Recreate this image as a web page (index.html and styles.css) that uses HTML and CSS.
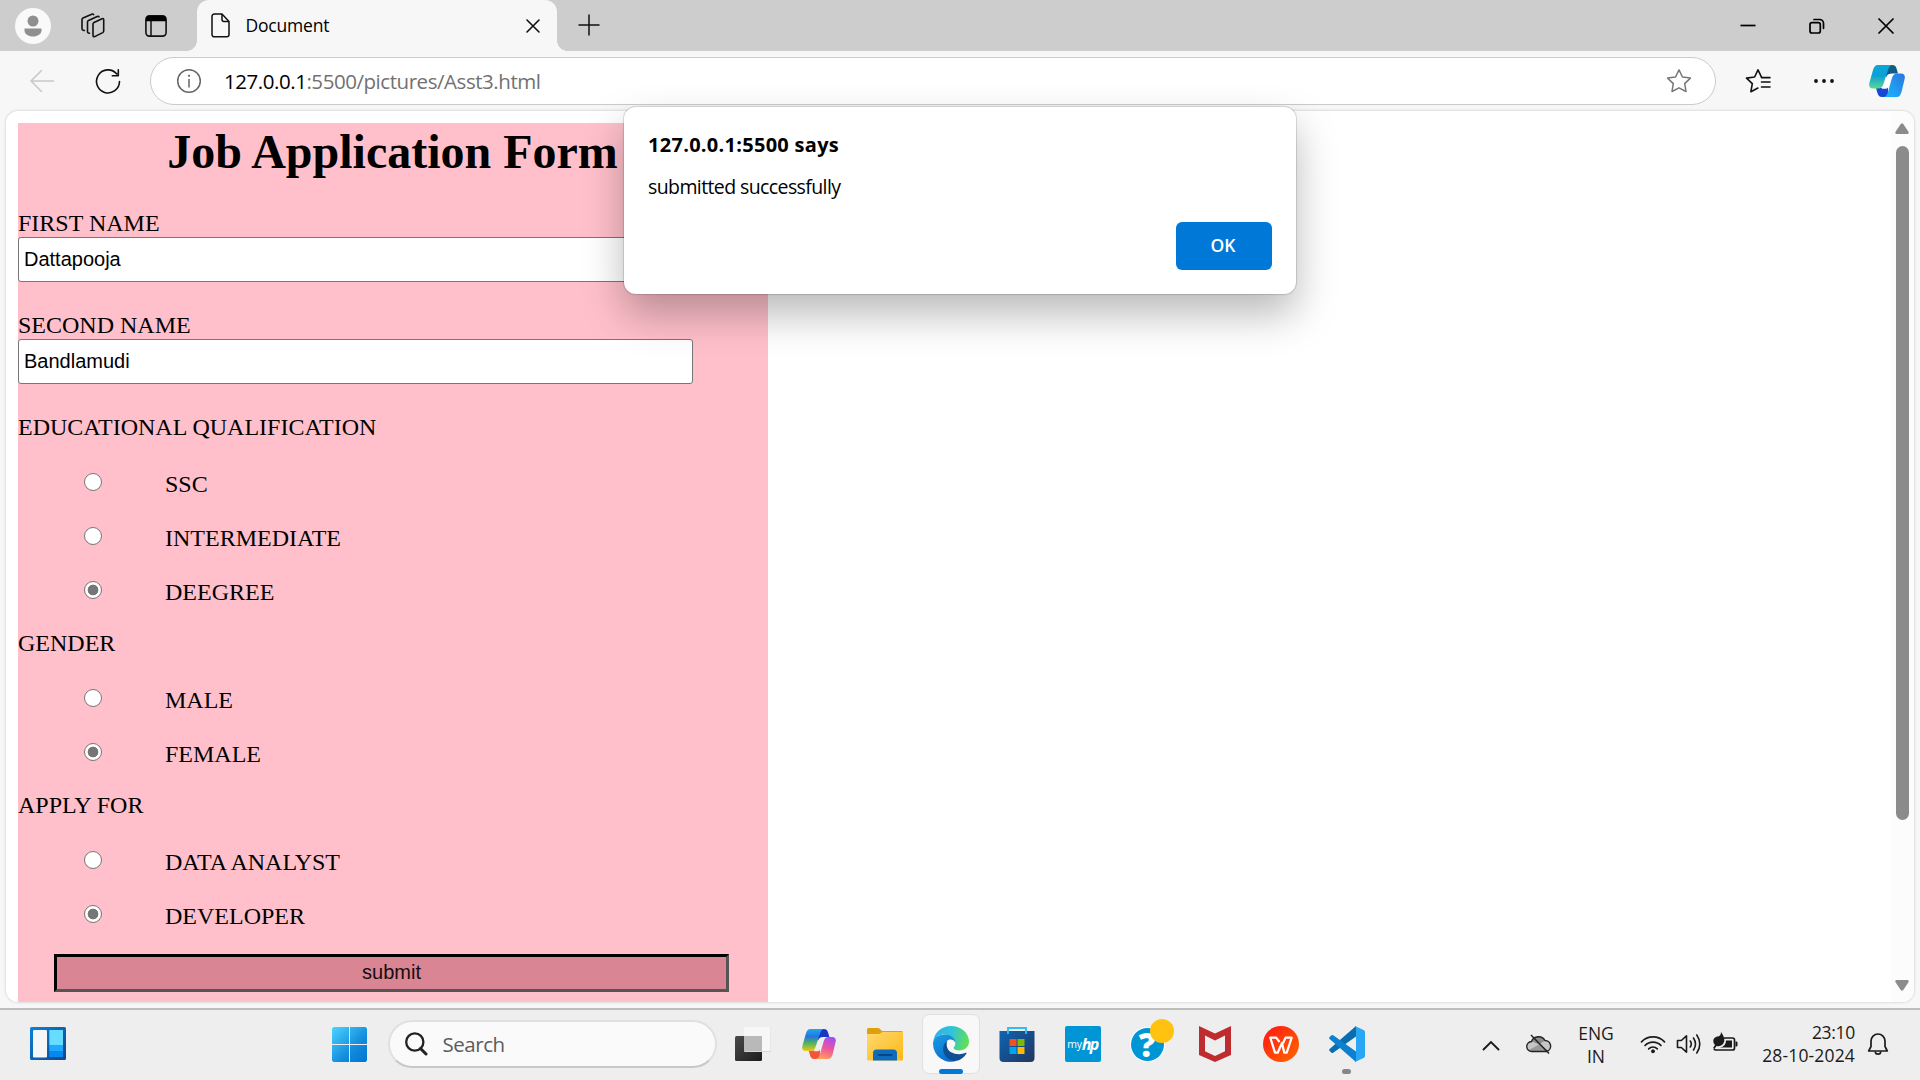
FILE: index.html
```html
<!DOCTYPE html>
<html lang="en">
<head>
<meta charset="utf-8">
<title>Document</title>
<link rel="stylesheet" href="styles.css">
</head>
<body>
<div class="window">
  <header class="tabstrip">
    <div class="avatar"><svg width="36" height="36" viewBox="0 0 36 36"><circle cx="18" cy="18" r="18" fill="#f9f9f9"/><circle cx="18" cy="13" r="5.5" fill="#8f8f8f"/><path d="M9.5 20.5h17v2c0 3.500-4 6-8.500 6s-8.500-2.500-8.500-6z" fill="#8f8f8f"/></svg></div>
    <svg class="ic-workspaces" width="26" height="26" viewBox="0 0 26 26" fill="none" stroke="#111" stroke-width="1.600" stroke-linejoin="round" stroke-linecap="round"><path d="M13 11q0-1 1-1.500l8-3.800q1.700-.6 1.700 1V18q0 1-1 1.600l-8 4q-1.700.6-1.700-1z"/><path d="M9.500 20.300l-1-.3q-1-.4-1-1.500V9q0-1 1-1.500l8.700-4q1.300-.5 1.800.4"/><path d="M4.300 17.500l-1-.3Q2 16.800 2 15.700V6.500q0-1 1-1.500l8.800-3.800q1.300-.5 1.800.4"/></svg>
    <svg class="ic-vtabs" width="22" height="22" viewBox="0 0 22 22"><rect x=".9" y=".9" width="20.200" height="20.200" rx="3.500" fill="none" stroke="#111" stroke-width="1.600"/><path d="M1 6.200V4a3 3 0 0 1 3-3h14a3 3 0 0 1 3 3v2.200z" fill="#000"/><path d="M6 6v15" stroke="#111" stroke-width="1.500"/></svg>
    <div class="tab">
      <svg width="19" height="25" viewBox="0 0 19 25" fill="none" stroke="#111" stroke-width="1.500" stroke-linejoin="round"><path d="M3.500 1H11l7 7.500v13a2.300 2.300 0 0 1-2.300 2.300H3.300A2.300 2.300 0 0 1 1 21.500v-18A2.300 2.300 0 0 1 3.500 1z"/><path d="M11 1v5.500a2 2 0 0 0 2 2h5"/></svg>
      <span class="tab-title">Document</span>
      <svg class="tab-x" width="14" height="14" viewBox="0 0 14 14" stroke="#111" stroke-width="1.600" stroke-linecap="round"><path d="M1 1l12 12M13 1L1 13"/></svg>
    </div>
    <svg class="ic-plus" width="22" height="22" viewBox="0 0 22 22" stroke="#111" stroke-width="1.500" stroke-linecap="round"><path d="M11 1v20M1 11h20"/></svg>
    <div class="winbtns">
      <svg width="16" height="16" viewBox="0 0 16 16"><path d="M.5 7.500h15" stroke="#000" stroke-width="1.700"/></svg>
      <svg width="16" height="16" viewBox="0 0 16 16" fill="none" stroke="#000" stroke-width="1.700"><rect x="1" y="4.700" width="10.300" height="10.300" rx="2"/><path d="M5 1.500h5.500a4 4 0 0 1 4 4v4.800" stroke-linecap="round"/></svg>
      <svg width="16" height="16" viewBox="0 0 16 16" stroke="#000" stroke-width="1.700" stroke-linecap="round"><path d="M1 1l14 14M15 1L1 15"/></svg>
    </div>
  </header>
  <nav class="toolbar">
    <svg class="ic-back" width="26" height="24" viewBox="0 0 26 24" fill="none" stroke="#c9c9c9" stroke-width="1.600" stroke-linecap="round" stroke-linejoin="round"><path d="M12.500 1.500L2 12l10.500 10.500M2 12h22.500"/></svg>
    <svg class="ic-reload" width="26" height="26" viewBox="0 0 26 26" fill="none" stroke="#111" stroke-width="1.600" stroke-linecap="round" stroke-linejoin="round"><path d="M24.500 13.500A11.500 11.500 0 1 1 21.800 6M23.300 1.800v6h-6"/></svg>
    <div class="address">
      <svg width="26" height="26" viewBox="0 0 26 26" fill="none" stroke="#666" stroke-width="1.500"><circle cx="13" cy="13" r="11.300"/><path d="M13 11.500v7.500" stroke-linecap="round"/><circle cx="13" cy="7.800" r="1.100" fill="#666" stroke="none"/></svg>
      <span class="url"><b>127.0.0.1</b>:5500/pictures/Asst3.html</span>
      <svg class="ic-star" width="26" height="26" viewBox="0 0 26 26" fill="none" stroke="#777" stroke-width="1.500" stroke-linejoin="round"><path d="M13 1.800l3.500 7.200 7.900 1.100-5.700 5.500 1.300 7.900-7-3.700-7 3.700 1.300-7.900-5.700-5.500L9.500 9z"/></svg>
    </div>
    <svg class="ic-fav" width="26" height="26" viewBox="0 0 26 26" fill="none" stroke="#111" stroke-width="1.600" stroke-linejoin="round" stroke-linecap="round"><path d="M16.500 9.100L13 1.800 9.600 9 1.500 10.100l5.800 5.600-1.400 8 7-3.700"/><path d="M16.500 9.600h8.500M16.500 14h8.500M16.500 19h8.500"/></svg>
    <svg class="ic-more" width="20" height="6" viewBox="0 0 20 6" fill="#111"><circle cx="2" cy="3" r="1.900"/><circle cx="10" cy="3" r="1.900"/><circle cx="18" cy="3" r="1.900"/></svg>
    <svg class="ic-copilot" width="36" height="34" viewBox="0 0 36 34">
      <defs>
        <linearGradient id="ca" x1="0" y1="0" x2="0" y2="1"><stop offset="0" stop-color="#08a8d8"/><stop offset=".45" stop-color="#0ca0d6"/><stop offset="1" stop-color="#5ad88c"/></linearGradient>
        <linearGradient id="cb" x1="1" y1="0" x2="0" y2="1"><stop offset="0" stop-color="#2b76dd"/><stop offset="1" stop-color="#19b9ff"/></linearGradient>
      </defs>
      <path d="M17 1h6c3 0 4 1.500 4.700 4l1.300 4.500h-6c-3 0-5 1-6 4z" fill="#0d5d86"/>
      <path d="M19 33h-6c-3 0-4-2-4.700-4.500L7 24h7c3 0 4-2 5-5z" fill="#1846d6"/>
      <path d="M7 1h17c-3 0-4 2-5 5l-4.600 14c-1 3-2.300 4.500-5.400 4.500H4c-3.500 0-4.500-2.500-3.500-6L4 6c1-3 2-5 5-5z" fill="url(#ca)"/>
      <path d="M29 33H14c3 0 4-2 5-5l4-14c1-3 2.300-4.500 5.400-4.500H32c3.500 0 4.500 2.500 3.500 6L32.500 28c-1 3-2 5-5 5z" fill="url(#cb)"/>
      <path d="M20.500 10h3.500q-1 1.200-1.700 3.500L19 23.500q-.6 1.200-2.500 1.200H12.500q1.500-1 2.200-3.500L18 12.500q.6-2 2.500-2.500z" fill="#fff"/>
    </svg>
  </nav>
  <main class="viewport">
    <form class="job-form">
      <h1>Job Application Form</h1>
      <div class="field"><label>FIRST NAME</label><input class="text" type="text" value="Dattapooja"></div>
      <div class="field"><label>SECOND NAME</label><input class="text" type="text" value="Bandlamudi"></div>
      <div class="group">
        <p>EDUCATIONAL QUALIFICATION</p>
        <label class="opt"><i class="radio"></i>SSC</label>
        <label class="opt"><i class="radio"></i>INTERMEDIATE</label>
        <label class="opt"><i class="radio on"></i>DEEGREE</label>
      </div>
      <div class="group">
        <p>GENDER</p>
        <label class="opt"><i class="radio"></i>MALE</label>
        <label class="opt"><i class="radio on"></i>FEMALE</label>
      </div>
      <div class="group">
        <p>APPLY FOR</p>
        <label class="opt"><i class="radio"></i>DATA ANALYST</label>
        <label class="opt"><i class="radio on"></i>DEVELOPER</label>
      </div>
      <button class="submit" type="button">submit</button>
    </form>
    <div class="scrollbar">
      <svg width="14" height="11" viewBox="0 0 14 11"><path d="M5.700 1Q7-.4 8.300 1l5 7.500Q14.300 11 12.500 11h-11Q-.3 11 .7 8.500z" fill="#8b8b8b"/></svg>
      <div class="thumb"></div>
      <svg class="down" width="14" height="11" viewBox="0 0 14 11"><path d="M5.700 10Q7 11.400 8.300 10l5-7.500Q14.300 0 12.500 0h-11Q-.3 0 .7 2.500z" fill="#8b8b8b"/></svg>
    </div>
  </main>
  <footer class="taskbar">
    <svg class="widgets" width="36" height="33" viewBox="0 0 36 33"><defs><linearGradient id="wa" x1="0" y1="0" x2="1" y2="1"><stop offset="0" stop-color="#0883d9"/><stop offset="1" stop-color="#10458c"/></linearGradient></defs><rect width="36" height="33" rx="1.500" fill="url(#wa)"/><rect x="3" y="3" width="14" height="27.500" rx="1.200" fill="#f6f6f6"/><path d="M19.300 3h13.700v15H19.300z" fill="#66dcff"/><path d="M19.300 18h13.700v6H19.300z" fill="#1ca9ff"/><path d="M19.300 24h13.700v6H19.300z" fill="#0788ef"/></svg>
    <svg class="start" width="35" height="35" viewBox="0 0 35 35"><defs><linearGradient id="sa" gradientUnits="userSpaceOnUse" x1="0" y1="0" x2="35" y2="35"><stop offset="0" stop-color="#4dd4ff"/><stop offset=".6" stop-color="#138ddd"/><stop offset="1" stop-color="#0074d1"/></linearGradient></defs><path d="M1.500 0H17v17H0V1.500zM18 0h15.500L35 1.500V17H18zM0 18h17v17H1.500L0 33.500zM18 18h17v15.500L33.500 35H18z" fill="url(#sa)"/></svg>
    <div class="search">
      <svg width="24" height="24" viewBox="0 0 24 24" fill="none" stroke="#222" stroke-width="2.300" stroke-linecap="round"><circle cx="10.800" cy="10" r="8.600"/><path d="M16.500 16.500l5.500 5.500" stroke-width="3"/></svg>
      <span>Search</span>
    </div>
    <div class="apps">
      <div class="app"><svg width="36" height="36" viewBox="0 0 36 36"><defs><linearGradient id="ta" x1="0" y1="0" x2="1" y2="1"><stop offset="0" stop-color="#4a4a4a"/><stop offset="1" stop-color="#1c1c1c"/></linearGradient></defs><rect y="10" width="27" height="25" rx="1.500" fill="url(#ta)"/><rect x="9" y="1" width="27" height="25" rx="1" fill="#d6d6d6"/><rect x="9" y="1" width="26.500" height="24" rx="1" fill="#f7f7f7"/><path d="M9 10h18v15H9z" fill="#b9b9b9"/></svg></div>
      <div class="app"><svg width="34" height="32" viewBox="0 0 36 34"><defs><linearGradient id="cc" x1="0" y1="0" x2="0" y2="1"><stop offset="0" stop-color="#22a6f2"/><stop offset=".35" stop-color="#2376dc"/><stop offset=".65" stop-color="#52b55a"/><stop offset="1" stop-color="#f2c811"/></linearGradient><linearGradient id="cd" x1=".6" y1="0" x2=".3" y2="1"><stop offset="0" stop-color="#a44ff0"/><stop offset=".5" stop-color="#f0569a"/><stop offset="1" stop-color="#ffa25a"/></linearGradient></defs>
      <path d="M17 1h6c3 0 4 1.500 4.700 4l1.300 4.500h-6c-3 0-5 1-6 4z" fill="#1837c8"/><path d="M19 33h-6c-3 0-4-2-4.700-4.500L7 24h7c3 0 4-2 5-5z" fill="#f2553c"/><path d="M7 1h17c-3 0-4 2-5 5l-4.600 14c-1 3-2.300 4.500-5.400 4.500H4c-3.500 0-4.500-2.500-3.500-6L4 6c1-3 2-5 5-5z" fill="url(#cc)"/><path d="M29 33H14c3 0 4-2 5-5l4-14c1-3 2.300-4.500 5.400-4.500H32c3.500 0 4.500 2.500 3.500 6L32.500 28c-1 3-2 5-5 5z" fill="url(#cd)"/><path d="M20.500 10h3.500q-1 1.200-1.700 3.500L19 23.500q-.6 1.200-2.500 1.200H12.500q1.500-1 2.200-3.500L18 12.500q.6-2 2.500-2.500z" fill="#eee"/></svg></div>
      <div class="app"><svg width="36" height="34" viewBox="0 0 36 34"><defs><linearGradient id="fa" x1="0" y1="0" x2="1" y2="1"><stop offset="0" stop-color="#ffd970"/><stop offset="1" stop-color="#fdb813"/></linearGradient></defs><path d="M0 2.500Q0 1 1.500 1H11q1 0 1.800.8L15 4h19.500Q36 4 36 5.500V12H0z" fill="#e0a00b"/><path d="M0 7h11.500q1.200 0 2-.7L15.500 5H36v27.500q0 1-1 1H1q-1 0-1-1z" fill="url(#fa)"/><path d="M6 33.500V26q0-3.500 3.500-3.500h17Q30 22.500 30 26v7.500z" fill="#0f6cbd"/><path d="M11.500 28h13" stroke="#0a4583" stroke-width="1.800" stroke-linecap="round"/></svg></div>
      <div class="app active"><svg width="36" height="36" viewBox="0 0 36 36"><defs><linearGradient id="ea" x1="0" y1=".3" x2="1" y2=".5"><stop offset="0" stop-color="#2bb2ee"/><stop offset=".5" stop-color="#33c3d6"/><stop offset="1" stop-color="#62e052"/></linearGradient><linearGradient id="eb" x1="0" y1="0" x2=".5" y2="1"><stop offset="0" stop-color="#1b9de0"/><stop offset="1" stop-color="#0870d2"/></linearGradient></defs><path d="M.3 15C1.500 6.500 8.500 0 18 0c10 0 18 7 18 15.500 0 5.500-4.500 9-9.500 9-4 0-6-1.500-6-2.500s1.800-1.700 1.800-4.500C22.300 12 17 8.500 11.500 8.500 6 8.500 2 11 .3 15z" fill="url(#ea)"/><path d="M0 18C0 12 5 8.500 11.500 8.500c6 0 10.800 3.500 10.800 8-1-2-2.600-3-4.800-3-4 0-6.500 4-5 10 1.200 5.500 6 10 11.500 11.300A18 18 0 0 1 0 18z" fill="url(#eb)"/><path d="M14.500 14.500c-7 5-5 15.500 2 19 3.500 2.500 8.500 1.500 12-.8 2.300-1.500 4-3.500 5-5.200.3-.7-.2-1-.8-.7C27 29.500 15 28.500 13.800 20c-.2-2 0-4 .7-5.500z" fill="#114f94"/></svg></div>
      <div class="app"><svg width="36" height="36" viewBox="0 0 36 36"><defs><linearGradient id="ma" x1="0" y1="0" x2="1" y2="1"><stop offset="0" stop-color="#0b66b5"/><stop offset="1" stop-color="#23355f"/></linearGradient></defs><path d="M9 8V2h18v6" fill="none" stroke="#31bdf4" stroke-width="1.900"/><path d="M.5 5h35v27q0 4-4 4h-27q-4 0-4-4z" fill="url(#ma)"/><path d="M9 5v3M27 5v3" stroke="#31bdf4" stroke-width="1.900"/><path d="M10.500 13h7v7h-7z" fill="#f25022"/><path d="M18.500 13h7v7h-7z" fill="#7fba00"/><path d="M10.500 21h7v7h-7z" fill="#00a4ef"/><path d="M18.500 21h7v7h-7z" fill="#ffb900"/></svg></div>
      <div class="app"><div class="myhp"><span class="my">my</span><span class="hp">hp</span></div></div>
      <div class="app"><div class="help">?<i class="badge"></i></div></div>
      <div class="app"><svg width="32" height="36" viewBox="0 0 32 36"><path d="M0 0l16 7.500L32 0v29l-16 7-16-7z" fill="#bf2c30"/><path d="M6 9.500l10 5 10-5v15.800l-10 4.700-10-4.700z" fill="#eee"/></svg></div>
      <div class="app"><svg width="36" height="36" viewBox="0 0 36 36"><defs><linearGradient id="pa" x1="0" y1="0" x2="1" y2="1"><stop offset="0" stop-color="#ff1414"/><stop offset="1" stop-color="#ff6a00"/></linearGradient></defs><circle cx="18" cy="18" r="18" fill="url(#pa)"/><path d="M16.500 16l-3.300-4.300H7.300l4.700 15h2.700l4.300-9.700 2.300 9.700h2.400l5-15h-6.200l-2.500 5.500" fill="none" stroke="#fff" stroke-width="2.200" stroke-linejoin="round"/></svg></div>
      <div class="app running"><svg width="36" height="36" viewBox="0 0 36 36"><path d="M27 0v10.500L4.200 26.800q-1 .7-2-.2L.6 25.100q-1-1 0-2z" fill="#0a6db0"/><path d="M27 36V25.500L4.200 9.200q-1-.7-2 .2L.6 10.900q-1 1 0 2z" fill="#0d80cf"/><path d="M26 0q-1 .3 1 1.500v33Q25 35.700 26 36l9-4.300q1-.5 1-1.700V6q0-1.200-1-1.700z" fill="#27a7f4"/></svg></div>
    </div>
    <div class="tray">
      <svg class="t-up" width="18" height="11" viewBox="0 0 18 11" fill="none" stroke="#1b1b1b" stroke-width="1.900" stroke-linecap="round"><path d="M1.500 9.500L9 2l7.500 7.500"/></svg>
      <svg class="t-cloud" width="26" height="22" viewBox="0 0 26 22"><path d="M6 18.500a5 5 0 0 1-.5-10A7.500 7.500 0 0 1 19 7.500a5.600 5.600 0 0 1 1.500 11z" fill="#c6c6c6"/><path d="M6 8.500C9 3 16 2 19 7.500l-6 4z" fill="#8d8d8d"/><path d="M3 17L13 11.500l10 6.500-3 .5H6z" fill="#9a9a9a"/><path d="M6 18.500a5 5 0 0 1-.5-10A7.500 7.500 0 0 1 19 7.500a5.600 5.600 0 0 1 1.500 11z" fill="none" stroke="#222" stroke-width="1.400"/><path d="M5 2l18 18.500" stroke="#222" stroke-width="1.500"/></svg>
      <div class="lang"><span>ENG</span><span>IN</span></div>
      <svg class="t-wifi" width="26" height="20" viewBox="0 0 26 20" fill="none" stroke="#1b1b1b" stroke-width="1.700" stroke-linecap="round"><path d="M1.500 7.800a16 16 0 0 1 23 0M5 11.500a11 11 0 0 1 16 0M8.700 14.800a6 6 0 0 1 8.600 0"/><circle cx="13" cy="17.300" r="1.500" fill="#1b1b1b" stroke-width="1"/></svg>
      <svg class="t-vol" width="26" height="22" viewBox="0 0 26 22" fill="none" stroke="#1b1b1b" stroke-width="1.600" stroke-linecap="round" stroke-linejoin="round"><path d="M1.500 7.500h3.800l5.200-4.700v16.400l-5.200-4.700H1.500z"/><path d="M14.300 8q2 3 0 6M17.500 5q4 6 0 12M20.800 2q6 9 0 18"/></svg>
      <svg class="t-bat" width="26" height="22" viewBox="0 0 26 22"><path d="M12 6h8.500q2 0 2 2v8q0 2-2 2H4q-1.500 0-2-1" fill="none" stroke="#1b1b1b" stroke-width="1.700"/><path d="M23.500 9.500h1q1 0 1 1.200v2.600q0 1.200-1 1.200h-1zM14 8.500h6v7H8q6-1 6-7z" fill="#1b1b1b"/><path d="M9 0c3 4 5 9 1.500 12.500Q8 15 4.500 14L2.500 17 1 16l2-3C-1 8 3 4.500 6 4.500 8 4 9 2.500 9 0z" fill="#1b1b1b"/></svg>
      <div class="clock"><span class="time">23:10</span><span class="date">28-10-2024</span></div>
      <svg class="t-bell" width="22" height="24" viewBox="0 0 22 24" fill="none" stroke="#1b1b1b" stroke-width="1.700" stroke-linejoin="round"><path d="M11 2a7 7 0 0 1 7 7v5.500l2.300 4.500H1.700L4 14.500V9a7 7 0 0 1 7-7z"/><path d="M8.300 19.500a2.700 2.700 0 0 0 5.400 0"/></svg>
    </div>
  </footer>
  <section class="alert" role="dialog">
    <h2>127.0.0.1:5500 says</h2>
    <p>submitted successfully</p>
    <button class="ok" type="button">OK</button>
  </section>
</div>
</body>
</html>
```
FILE: styles.css
```css
* { box-sizing: border-box; }
body { margin: 0; background: #f7f7f7; overflow: hidden; }
svg { display: block; flex: none; }
h1, h2, p { margin: 0; }

.window {
  position: relative;
  width: 1920px;
  height: 1080px;
  display: grid;
  grid-template-rows: 51px 60px 891px 78px;
  font-family: "Open Sans", "Noto Sans", sans-serif;
  color: #000;
}

/* Tab strip */
.tabstrip { display: flex; align-items: flex-start; background: #cdcdcd; }
.avatar { margin: 8px 0 0 15px; }
.ic-workspaces { margin: 13px 0 0 29px; }
.ic-vtabs { margin: 15px 0 0 39px; }
.tab {
  position: relative;
  display: flex;
  align-items: center;
  width: 360px;
  height: 51px;
  margin-left: 30px;
  padding: 0 17px 0 13.5px;
  background: #f7f7f7;
  border-radius: 12px 12px 0 0;
}
.tab::before, .tab::after {
  content: "";
  position: absolute;
  bottom: 0;
  width: 10px;
  height: 10px;
}
.tab::before { left: -10px; background: radial-gradient(circle at 0 0, transparent 9.5px, #f7f7f7 10px); }
.tab::after { right: -10px; background: radial-gradient(circle at 100% 0, transparent 9.5px, #f7f7f7 10px); }
.tab-title { margin-left: 16px; padding-bottom: 1px; font-size: 17.5px; letter-spacing: -0.2px; }
.tab-x { margin-left: auto; }
.ic-plus { margin: 14px 0 0 21px; }
.winbtns { display: flex; gap: 53px; margin: 18px 26.5px 0 auto; }

/* Toolbar */
.toolbar { display: flex; align-items: center; background: #f7f7f7; }
.ic-back { margin-left: 29px; }
.ic-reload { margin-left: 40px; }
.address {
  display: flex;
  align-items: center;
  width: 1566px;
  height: 48px;
  margin: 0 0 0 29px;
  padding: 0 23.5px 0 25px;
  border: 1px solid #cbcbcb;
  border-radius: 24px;
  background: #fff;
}
.url { margin-left: 22px; font-size: 20.5px; letter-spacing: -0.45px; color: #717171; }
.url b { font-weight: 400; color: #000; }
.ic-star { margin-left: auto; }
.ic-fav { margin-left: 29px; }
.ic-more { margin-left: 43px; }
.ic-copilot { margin-left: 35px; }

/* Page area */
.viewport {
  display: flex;
  align-items: flex-start;
  width: 1908px;
  height: 891px;
  margin-left: 6px;
  padding: 12px 0 0 12px;
  background: #fff;
  border-radius: 12px;
  overflow: hidden;
  box-shadow: 0 0 2px 1px #dedede;
}
.job-form {
  width: 750px;
  height: 900px;
  background: #ffc0cb;
  font: 24px/27px "Liberation Serif", "Times New Roman", serif;
}
.job-form h1 {
  height: 60px;
  margin-bottom: 27px;
  padding-right: 1px;
  font-size: 48px;
  line-height: 57px;
  text-align: center;
}
.field { height: 102px; }
.field label { display: block; }
.text {
  display: block;
  width: 675px;
  height: 45px;
  padding: 1px 5px;
  border: 1px solid #767676;
  border-radius: 3px;
  background: #fff;
  font: 20px "Liberation Sans", Arial, sans-serif;
  color: #000;
}
.group p { margin-bottom: 30px; }
.opt { display: flex; height: 27px; margin-bottom: 27px; }
.group .opt:last-child { margin-bottom: 24px; }
.radio {
  width: 18px;
  height: 18px;
  margin: 2px 62.6px 0 66.4px;
  border: 1.5px solid #767676;
  border-radius: 50%;
  background: #fff;
}
.radio.on { background: radial-gradient(circle, #767676 5px, #fff 5.7px); }
.submit {
  display: block;
  width: 675px;
  height: 38px;
  margin: 0 0 0 36px;
  padding: 0 0 2px;
  border: 3px solid;
  border-color: #000 #555 #555 #000;
  background: #da8593;
  font: 20px "Liberation Sans", Arial, sans-serif;
  color: #150d0e;
}

.scrollbar {
  display: flex;
  flex-direction: column;
  align-items: center;
  width: 23px;
  height: 891px;
  margin: -12px 0 0 auto;
  padding: 12px 1px 11px 0;
  background: #fcfcfc;
}
.thumb { width: 13px; height: 674px; margin-top: 12px; border-radius: 7px; background: #8b8b8b; }
.down { margin-top: auto; }

/* Alert dialog */
.alert {
  position: absolute;
  left: 624px;
  top: 107px;
  width: 672px;
  height: 187px;
  padding: 24px;
  display: flex;
  flex-direction: column;
  border-radius: 12px;
  background: #fff;
  box-shadow: 0 0 1px 1px rgba(0,0,0,.14), 0 20px 42px rgba(0,0,0,.28);
}
.alert h2 { font-size: 20px; line-height: 28px; font-weight: 700; letter-spacing: 0.28px; }
.alert p { margin-top: 14px; font-size: 19.5px; line-height: 28px; letter-spacing: -0.6px; }
.ok {
  width: 96px;
  height: 48px;
  margin: 21px 0 0 auto;
  padding: 0 2px 2px 0;
  border: 0;
  border-radius: 6px;
  background: #0078d7;
  color: #fff;
  font: 600 17.5px/46px "Open Sans", "Noto Sans", sans-serif;
}

/* Taskbar */
.taskbar {
  display: flex;
  align-items: center;
  height: 72px;
  margin-top: 6px;
  border-top: 2px solid #bdbdbd;
  background: #eee;
}
.widgets { margin: -3px 0 0 30px; }
.start { margin: -1px 0 0 266px; }
.search {
  display: flex;
  align-items: center;
  width: 329px;
  height: 48px;
  margin: -2px 0 0 20.5px;
  padding-left: 14px;
  border: 2px solid #e0e0e0;
  border-bottom-color: #c8c8c8;
  border-radius: 24px;
  background: #fafafa;
  font-size: 20.5px;
  letter-spacing: -0.45px;
  color: #5c5c5c;
}
.search span { margin-left: 15px; }
.apps { display: flex; height: 60px; margin: -2px 0 0 3px; }
.app { position: relative; display: flex; align-items: center; justify-content: center; width: 66px; height: 60px; }
.app > * { position: relative; }
.app.active::before {
  content: "";
  position: absolute;
  inset: 0 4px 0;
  border: 1px solid #e0e0e0;
  border-radius: 7px;
  background: #f8f8f8;
}
.app.active::after, .app.running::after {
  content: "";
  position: absolute;
  bottom: 0;
  width: 24px;
  height: 5px;
  border-radius: 3px;
  background: #0078d7;
}
.app.running::after { width: 9px; background: #868686; }
.myhp {
  display: flex;
  align-items: center;
  justify-content: center;
  width: 36px;
  height: 36px;
  border-radius: 2px;
  background: #0096d6;
  color: #fff;
  font-size: 10.5px;
  letter-spacing: -0.3px;
}
.hp { font: italic 700 16px "Open Sans", sans-serif; letter-spacing: -1.6px; }
.help {
  width: 33px;
  height: 33px;
  margin-left: -3px;
  border-radius: 50%;
  box-shadow: 0 0 0 1px #fff;
  background: #0096d6;
  color: #fff;
  font-weight: 800;
  font-size: 33px;
  line-height: 33px;
  text-align: center;
}
.badge { position: absolute; right: -10px; top: -9px; width: 24px; height: 24px; border-radius: 50%; background: #ffc20e; }

.tray { display: flex; align-items: center; height: 70px; margin-left: auto; padding-right: 31px; color: #1b1b1b; font-size: 17.5px; line-height: 23px; }
.t-cloud { margin-left: 26px; margin-top: -2px; }
.lang { width: 60px; margin-left: 14px; text-align: center; }
.lang span, .clock span { display: block; }
.t-wifi { margin-left: 14px; margin-top: -3px; }
.t-vol { margin-left: 10px; margin-top: -2px; }
.t-bat { margin-left: 10px; margin-top: -4px; }
.clock { width: 117px; margin-top: -3px; text-align: right; }
.time { letter-spacing: -0.3px; }
.date { letter-spacing: 0.15px; }
.t-bell { margin-left: 12px; margin-top: -2px; }
```
